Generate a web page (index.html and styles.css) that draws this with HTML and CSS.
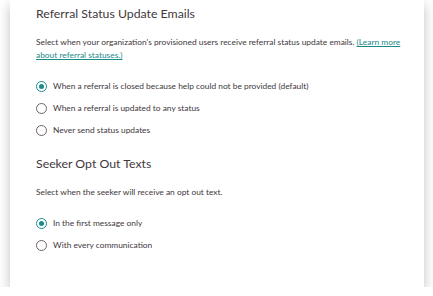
FILE: index.html
```html
<!DOCTYPE html>
<html lang="en">
<head>
    <meta charset="UTF-8">
    <title>Notification Settings</title>
    <link rel="stylesheet" href="styles.css">
</head>
<body>
    <div class="card">
        <section class="setting">
            <h2>Referral Status Update Emails</h2>
            <p class="help">Select when your organization's provisioned users receive referral status update emails. <a href="#">(Learn more</a><br><a href="#">about referral statuses.)</a></p>
            <div class="options">
                <label class="option"><input type="radio" name="status" checked><span class="dot"></span>When a referral is closed because help could not be provided (default)</label>
                <label class="option"><input type="radio" name="status"><span class="dot"></span>When a referral is updated to any status</label>
                <label class="option"><input type="radio" name="status"><span class="dot"></span>Never send status updates</label>
            </div>
        </section>
        <section class="setting">
            <h2>Seeker Opt Out Texts</h2>
            <p class="help">Select when the seeker will receive an opt out text.</p>
            <div class="options">
                <label class="option"><input type="radio" name="optout" checked><span class="dot"></span>In the first message only</label>
                <label class="option"><input type="radio" name="optout"><span class="dot"></span>With every communication</label>
            </div>
        </section>
    </div>
</body>
</html>
```

FILE: styles.css
```css
body {
    margin: 0;
    background-color: #fff;
    font-family: 'Lato', sans-serif;
    color: #41373d;
}

.card {
    width: 414px;
    height: 287px;
    margin-left: 10px;
    padding: 6px 18px 0 26px;
    box-sizing: border-box;
    background-color: #fff;
    box-shadow: 0 5px 12px rgba(0, 0, 0, 0.25);
}

.setting + .setting {
    margin-top: 19px;
}

.setting h2 {
    margin: 0;
    font-size: 12.3px;
    font-weight: 400;
    line-height: 16px;
    color: #43383e;
}

.help {
    margin: 14px 0 17px;
    font-size: 8.4px;
    line-height: 13px;
}

.help a {
    color: #1b8b89;
}

.options {
    display: flex;
    flex-direction: column;
    gap: 8px;
}

.option {
    display: flex;
    align-items: center;
    gap: 6px;
    font-size: 8.4px;
    line-height: 14px;
}

.option input {
    display: none;
}

.dot {
    width: 11px;
    height: 11px;
    border: 1px solid #6e6468;
    border-radius: 50%;
    box-sizing: border-box;
    position: relative;
}

.option input:checked + .dot {
    border-color: #1b8b89;
}

.option input:checked + .dot::after {
    content: "";
    position: absolute;
    top: 2px;
    left: 2px;
    width: 5px;
    height: 5px;
    border-radius: 50%;
    background-color: #1b8b89;
}
```
